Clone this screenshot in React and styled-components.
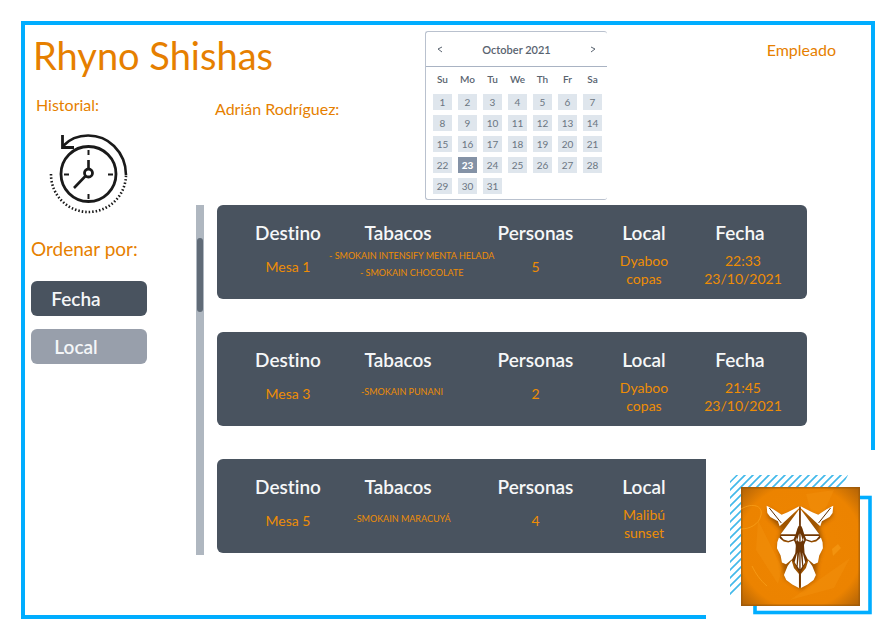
import React, { useState } from "react";
import styled, { createGlobalStyle } from "styled-components";

const color = {
  sky: "#00adff",
  orange: "#e67f00",
  amber: "#ee8d05",
  slate: "#49535f",
  mist: "#989fab",
  cell: "#dfe6ed",
};

const GlobalStyle = createGlobalStyle`
  *, *::before, *::after { box-sizing: border-box; }
  body {
    margin: 0;
    background: #fff;
    font-family: Lato, "Open Sans", sans-serif;
    font-variant-ligatures: none;
  }
  button { font: inherit; border: 0; padding: 0; cursor: pointer; }
  h1, h2, p, dl, dd { margin: 0; font-weight: 400; }
`;

const Page = styled.div`
  position: relative;
  display: flex;
  min-height: 100vh;
  padding: 21px 19px 20px 21px;
`;

const Frame = styled.main`
  flex: 1;
  min-width: 0;
  display: grid;
  grid-template-columns: 171px 229px minmax(0, 1fr);
  grid-template-rows: 60px 120px auto;
  border: 4px solid ${color.sky};
`;

const Title = styled.h1`
  grid-column: 1 / 3;
  padding: 6px 0 0 8px;
  font-size: 38px;
  line-height: 48px;
  color: ${color.orange};
`;

const Sidebar = styled.aside`
  grid-column: 1;
  grid-row: 2 / 4;
  display: flex;
  flex-direction: column;
  align-items: flex-start;
  padding: 10px 0 0 6px;
  color: ${color.orange};
`;

const SectionName = styled.h2`
  padding-left: 5px;
  font-size: 16px;
  line-height: 20px;
`;

const ClockIcon = styled.svg`
  width: 80px;
  height: 82px;
  margin: 18px 0 0 18px;
`;

const SortLabel = styled.p`
  margin: 22px 0 20px;
  font-size: 19px;
  line-height: 24px;
`;

const SortOptions = styled.div`
  display: grid;
  gap: 13px;
`;

const SortButton = styled.button`
  width: 116px;
  height: 35px;
  padding-right: 26px;
  border-radius: 6px;
  background: ${(p) => (p.$active ? color.slate : color.mist)};
  color: #f4f6f8;
  font-size: 19px;
  font-weight: 600;
`;

const Person = styled.p`
  grid-column: 2;
  grid-row: 2;
  padding: 14px 0 0 19px;
  font-size: 16px;
  line-height: 20px;
  color: ${color.orange};
`;

const TopRight = styled.div`
  grid-column: 3;
  grid-row: 1 / 3;
  display: flex;
  justify-content: space-between;
  align-items: flex-start;
  padding: 6px 35px 0 0;
`;

const Role = styled.a`
  margin-top: 9px;
  font-size: 16px;
  line-height: 20px;
  color: ${color.orange};
  text-decoration: none;
`;

const CalendarBox = styled.section`
  width: 182px;
  height: 169px;
  border: 1px solid #b9c1ce;
  border-right: 0;
  border-radius: 3px;
`;

const CalendarHead = styled.div`
  display: flex;
  align-items: center;
  justify-content: space-between;
  height: 35px;
  padding: 0 10px;
  border-bottom: 1px solid #a9b3c3;
  font-size: 11px;
  font-weight: 600;
  color: #59636f;
`;

const Arrow = styled.button`
  display: flex;
  background: none;
  color: #59636f;
`;

const Month = styled.table`
  width: 175px;
  margin-left: 4px;
  border-collapse: collapse;
  table-layout: fixed;
  text-align: center;

  th {
    height: 24px;
    padding: 0;
    font-size: 10px;
    font-weight: 600;
    color: #59636f;
  }
  td {
    height: 21px;
    padding: 0;
  }
`;

const Day = styled.button`
  display: block;
  width: 19px;
  height: 16px;
  margin: 0 auto;
  background: ${(p) => (p.$on ? "#8492a6" : color.cell)};
  color: ${(p) => (p.$on ? "#fff" : "#6b7581")};
  font-size: 10px;
  font-weight: ${(p) => (p.$on ? 900 : 400)};
  line-height: 16px;
`;

const History = styled.section`
  grid-column: 2 / 4;
  grid-row: 3;
  display: flex;
  align-items: flex-start;
  gap: 13px;
  padding: 0 64px 0 0;
`;

const Track = styled.div`
  flex: none;
  align-self: flex-start;
  width: 8px;
  height: 350px;
  padding: 33px 1px 0;
  background: #afb7c0;
`;

const Thumb = styled.div`
  height: 74px;
  border-radius: 3px;
  background: #606b77;
`;

const Cards = styled.div`
  flex: 1;
  min-width: 0;
  display: grid;
  gap: 33px;
`;

const Card = styled.dl`
  display: grid;
  grid-template-columns: 82fr 146fr 121fr 96fr 102fr;
  height: 94px;
  padding: 16px 13px 0 30px;
  border-radius: 6px;
  background: ${color.slate};
`;

const Field = styled.div`
  min-width: 0;
  text-align: center;
`;

const Term = styled.dt`
  padding-right: ${(p) => p.$inset}px;
  font-size: 19px;
  font-weight: 600;
  line-height: 24px;
  color: #f6f7f8;
`;

const Value = styled.dd`
  display: flex;
  flex-direction: column;
  justify-content: center;
  width: max-content;
  min-width: 100%;
  height: ${(p) => p.$height}px;
  font-size: ${(p) => (p.$small ? 9 : 14)}px;
  line-height: ${(p) => (p.$small ? 17 : 18)}px;
  color: ${color.amber};
`;

const Brand = styled.a`
  position: absolute;
  right: 0;
  bottom: 0;
  width: 188px;
  height: 189px;
  background: #fff;

  svg { display: block; }
`;

const columns = [
  { key: "destino", label: "Destino", height: 44, inset: 0 },
  { key: "tabacos", label: "Tabacos", height: 38, inset: 8, small: true },
  { key: "personas", label: "Personas", height: 44, inset: 0 },
  { key: "local", label: "Local", height: 50, inset: 0 },
  { key: "fecha", label: "Fecha", height: 50, inset: 6 },
];

const orders = [
  {
    destino: ["Mesa 1"],
    tabacos: ["- SMOKAIN INTENSIFY MENTA HELADA", "- SMOKAIN CHOCOLATE"],
    personas: ["5"],
    local: ["Dyaboo", "copas"],
    fecha: ["22:33", "23/10/2021"],
  },
  {
    destino: ["Mesa 3"],
    tabacos: ["-SMOKAIN PUNANI"],
    personas: ["2"],
    local: ["Dyaboo", "copas"],
    fecha: ["21:45", "23/10/2021"],
  },
  {
    destino: ["Mesa 5"],
    tabacos: ["-SMOKAIN MARACUYÁ"],
    personas: ["4"],
    local: ["Malibú", "sunset"],
    fecha: [],
  },
];

const weekdays = ["Su", "Mo", "Tu", "We", "Th", "Fr", "Sa"];
const weeks = [0, 1, 2, 3, 4].map((w) =>
  weekdays.map((_, d) => w * 7 + d + 1).filter((n) => n <= 31)
);

function Chevron({ d }) {
  return (
    <svg width="8" height="8" viewBox="0 0 8 8" fill="none" stroke="currentColor" aria-hidden="true">
      <path d={d} />
    </svg>
  );
}

function Calendar() {
  const [selected, setSelected] = useState(23);
  return (
    <CalendarBox aria-label="Calendario">
      <CalendarHead>
        <Arrow aria-label="Mes anterior"><Chevron d="M6 2 2 4l4 3" /></Arrow>
        <span>October 2021</span>
        <Arrow aria-label="Mes siguiente"><Chevron d="m2 2 4 2-4 3" /></Arrow>
      </CalendarHead>
      <Month>
        <thead>
          <tr>{weekdays.map((d) => <th key={d} scope="col">{d}</th>)}</tr>
        </thead>
        <tbody>
          {weeks.map((week) => (
            <tr key={week[0]}>
              {week.map((n) => (
                <td key={n}>
                  <Day $on={n === selected} onClick={() => setSelected(n)}>{n}</Day>
                </td>
              ))}
            </tr>
          ))}
        </tbody>
      </Month>
    </CalendarBox>
  );
}

function HistoryClock() {
  return (
    <ClockIcon viewBox="0 0 80 82" fill="none" stroke="#1a1a1a" strokeWidth="2" aria-hidden="true">
      <circle cx="39.500" cy="41" r="27.500" strokeWidth="2.800" />
      <path d="M14 13C27-1 51-1 65 13c8 8 12 18 12 29" strokeWidth="2.600" />
      <path d="M13.500 2v12.500H25" strokeWidth="2.800" />
      <path d="M2 41a37.500 37.500 0 0 0 75 1" strokeWidth="2.600" strokeDasharray="1.500 2" />
      <circle cx="39.500" cy="40" r="4" strokeWidth="2.800" />
      <path d="M39.500 36V27M36.500 43 25 55" strokeWidth="2.600" />
      <path d="M39.500 17v5M39.500 61v5M15 41.500h5M59 41.500h5" />
    </ClockIcon>
  );
}

function HalfFace() {
  return (
    <>
      <g fill="#fff">
        <path d="M95 77 115 88 140 104 158 97 193 79V84L134 139 129 124 106 111 97 99Z" />
        <path d="M193 88 137 163H182L188 144 193 136Z" />
        <path d="M137 168H180L176 178 160 183 146 179Z" />
        <path d="M132 173 146 185 160 188 177 182 183 194 181 220 172 237 153 253 141 248 137 227 126 205 127 187Z" />
        <path d="M170 242 158 258 147 285 154 300 172 314 192 324V282L177 264Z" />
      </g>
      <path d="M103 84 139 129" stroke="#5a2c02" strokeWidth="3" />
      <path d="M193 134 186 157 181 184 185 213 175 242 194 280Z" fill="#6b3403" />
      <path d="M193 160 187 180 193 187ZM185 172 182 181 185 185ZM193 214 188 260 193 268ZM187 218 179 247 185 257Z" fill="#fff" />
    </>
  );
}

function RhinoLogo() {
  return (
    <svg width="188" height="189" viewBox="0 0 188 189" aria-hidden="true">
      <defs>
        <pattern id="hatch" width="8" height="8" patternUnits="userSpaceOnUse">
          <path d="M-2 10 10-2M-2 2 2-2M6 10 10 6" stroke="#43b9ea" strokeWidth="1.700" />
        </pattern>
        <radialGradient id="tile" cx="50%" cy="50%" r="72%">
          <stop offset="0" stopColor="#ee8500" />
          <stop offset="0.720" stopColor="#ec8300" />
          <stop offset="1" stopColor="#a95e08" />
        </radialGradient>
        <filter id="soft" x="-20%" y="-20%" width="140%" height="140%">
          <feGaussianBlur stdDeviation="7" />
        </filter>
        <clipPath id="tileClip"><rect x="35" y="37" width="119" height="119" /></clipPath>
      </defs>
      <rect x="49" y="47.500" width="115" height="115" fill="none" stroke={color.sky} strokeWidth="3.600" />
      <path d="M30 25H142L136 37H35V139L29 145H24V31Z" fill="url(#hatch)" />
      <rect x="35" y="37" width="119" height="119" fill="url(#tile)" />
      <g clipPath="url(#tileClip)" fill="none">
        <rect x="35" y="37" width="119" height="119" stroke="#8f530d" strokeWidth="3" opacity="0.550" />
        <path d="M35 59c12-7 22-3 20 6-2 10-12 14-20 14M46 116c4 8 8 14 15 20" stroke="#faa21c" opacity="0.700" />
        <path d="M126 99l6-5 3 4-8 8Z" fill="#faa21c" opacity="0.500" />
        <path d="M52 70 76 118 72 134 50 100ZM100 44l28-4-18 40ZM84 150l60-42-16 30Z" fill="#f89a16" opacity="0.250" />
      </g>
      <g transform="translate(29 30) scale(0.333)">
        <path d="M98 84 140 112 195 88 250 112 292 84 292 108 252 140 264 190 246 255 242 295 198 328 150 295 142 250 128 200 140 150 100 110Z" fill="#6b3403" opacity="0.600" filter="url(#soft)" />
        <path d="M194 92 137 164 133 178 175 188 172 240 194 272 216 240 214 188 258 178 253 164Z" fill="#713703" />
        <HalfFace />
        <g transform="translate(390 0) scale(-1 1)"><HalfFace /></g>
        <path d="M195 80V136M195 275V323" stroke="#663003" strokeWidth="4" />
      </g>
    </svg>
  );
}

export default function App() {
  const [sort, setSort] = useState("Fecha");
  return (
    <>
      <GlobalStyle />
      <Page>
        <Frame>
          <Title>Rhyno Shishas</Title>
          <Sidebar>
            <SectionName>Historial:</SectionName>
            <HistoryClock />
            <SortLabel id="sort-label">Ordenar por:</SortLabel>
            <SortOptions role="group" aria-labelledby="sort-label">
              {["Fecha", "Local"].map((name) => (
                <SortButton
                  key={name}
                  $active={sort === name}
                  aria-pressed={sort === name}
                  onClick={() => setSort(name)}
                >
                  {name}
                </SortButton>
              ))}
            </SortOptions>
          </Sidebar>
          <Person>Adrián Rodríguez:</Person>
          <TopRight>
            <Calendar />
            <Role href="#empleado">Empleado</Role>
          </TopRight>
          <History aria-label="Historial">
            <Track><Thumb /></Track>
            <Cards>
              {orders.map((order) => (
                <Card key={order.destino[0]}>
                  {columns.map((c) => (
                    <Field key={c.key}>
                      {order[c.key].length > 0 && (
                        <>
                          <Term $inset={c.inset}>{c.label}</Term>
                          <Value $small={c.small} $height={c.height}>
                            {order[c.key].map((line) => <span key={line}>{line}</span>)}
                          </Value>
                        </>
                      )}
                    </Field>
                  ))}
                </Card>
              ))}
            </Cards>
          </History>
        </Frame>
        <Brand href="#inicio" aria-label="Rhyno Shishas">
          <RhinoLogo />
        </Brand>
      </Page>
    </>
  );
}
